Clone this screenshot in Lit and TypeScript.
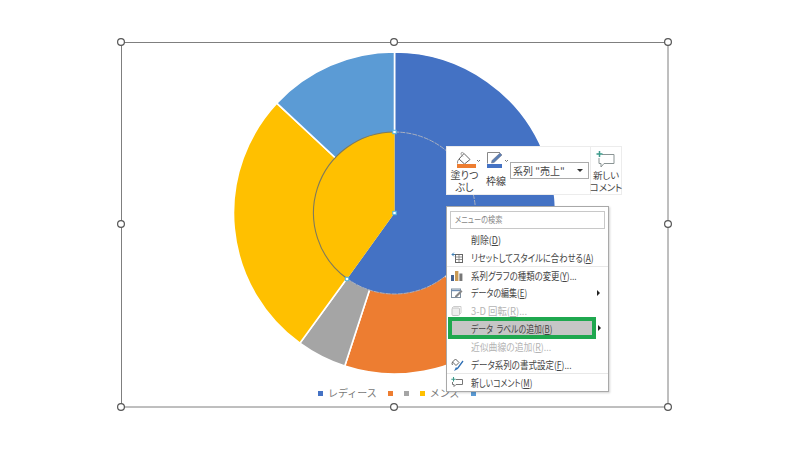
import { LitElement, html, css, svg } from "lit";
import { customElement } from "lit/decorators.js";

const CX = 394.5, CY = 213;
const pt = (r: number, a: number) => {
  const t = (a * Math.PI) / 180;
  return [CX + r * Math.sin(t), CY - r * Math.cos(t)];
};
const wedge = (r: number, a0: number, a1: number) => {
  const [x0, y0] = pt(r, a0), [x1, y1] = pt(r, a1);
  return `M${CX} ${CY}L${x0} ${y0}A${r} ${r} 0 ${a1 - a0 > 180 ? 1 : 0} 1 ${x1} ${y1}Z`;
};
const arc = (r: number, a0: number, a1: number) => {
  const [x0, y0] = pt(r, a0), [x1, y1] = pt(r, a1);
  return `M${x0} ${y0}A${r} ${r} 0 ${a1 - a0 > 180 ? 1 : 0} 1 ${x1} ${y1}`;
};
const outer: [number, number, string][] = [
  [0, 141, "#4472c4"], [141, 198, "#ed7d31"], [198, 216, "#a5a5a5"], [216, 313, "#ffc000"], [313, 360, "#5b9bd5"],
];
const inner: [number, number, string][] = [[0, 215.7, "#4472c4"], [215.7, 360, "#ffc000"]];
const handles: [number, number][] = [[121, 42], [394, 42], [668, 42], [121, 224], [668, 224], [121, 407], [394, 407], [668, 407]];
const legend: [string, string][] = [["#4472c4", "レディース"], ["#ed7d31", ""], ["#a5a5a5", ""], ["#ffc000", "メンズ"], ["#5b9bd5", ""]];

const icons = {
  reset: svg`<svg width="13" height="11" viewBox="0 0 13 11"><path d="M1 2.5 h4 M2.8 .7 L1 2.5 L2.8 4.3" fill="none" stroke="#3f7fb5" stroke-width="1"/><rect x="4.5" y="2.5" width="7" height="8" fill="#fff" stroke="#666"/><path d="M4.5 5 h7 M4.5 7.5 h7 M8 2.5 v8" stroke="#777" stroke-width=".8"/></svg>`,
  chart: svg`<svg width="12" height="10" viewBox="0 0 12 10"><rect x="0" y="4" width="3" height="6" fill="#44618f"/><rect x="4" y="0" width="3.4" height="10" fill="#c99a55"/><rect x="8.4" y="2.5" width="3" height="7.5" fill="#777"/></svg>`,
  edit: svg`<svg width="12" height="10" viewBox="0 0 12 10"><rect x=".5" y="1" width="9" height="8.5" fill="#fff" stroke="#7f8f9f"/><path d="M.5 2.5 h9" stroke="#6f8fb5" stroke-width="1.4"/><path d="M4 8 L10 2 L11.5 3.5 L6 9 L4 9 Z" fill="#888"/></svg>`,
  cube: svg`<svg width="11" height="10" viewBox="0 0 11 10"><rect x="1" y="2" width="7.5" height="7.5" rx="1" fill="#eee" stroke="#c4c4c4"/><path d="M1 2 L2.5 .5 H10 V7 L8.5 8.5" fill="none" stroke="#ccc"/></svg>`,
  format: svg`<svg width="13" height="13" viewBox="0 0 13 13"><path d="M1.5 4 L4.5 1 L8 4.5 L5 7.5 Z" fill="#fff" stroke="#666"/><path d="M1.5 4 Q.5 6 1.5 7" fill="none" stroke="#666"/><path d="M12 3 L6.5 10.5 L4.5 11.5 L5.5 9.5" fill="none" stroke="#2f6fb5" stroke-width="1.3"/></svg>`,
  comment: svg`<svg width="12" height="10" viewBox="0 0 12 10"><path d="M5 2.5 H11.5 V7.5 H5 L3 9.5 V7.5 H1.5 V5" fill="#fff" stroke="#777"/><path d="M2.5 0 V4.5 M.3 2.2 H4.7" stroke="#3d9a8b" stroke-width="1.1"/></svg>`,
};

interface Item { t: string; k: string; end?: string; sx: number; icon?: unknown; cls?: string; arrow?: boolean; }
const items: Item[] = [
  { t: "削除(", k: "D", end: ")", sx: 0.89 },
  { t: "リセットしてスタイルに合わせる(", k: "A", end: ")", sx: 0.83, icon: icons.reset },
  { t: "系列グラフの種類の変更(", k: "Y", end: ")...", sx: 0.84, icon: icons.chart, cls: "sep" },
  { t: "データの編集(", k: "E", end: ")", sx: 0.8, icon: icons.edit, arrow: true },
  { t: "3-D 回転(", k: "R", end: ")...", sx: 0.94, icon: icons.cube, cls: "dis" },
  { t: "データ\u00a0\u00a0ラベルの追加(", k: "B", end: ")", sx: 0.785, cls: "hl", arrow: true },
  { t: "近似曲線の追加(", k: "R", end: ")...", sx: 0.88, cls: "dis" },
  { t: "データ系列の書式設定(", k: "F", end: ")...", sx: 0.85, icon: icons.format },
  { t: "新しいコメント(", k: "M", end: ")", sx: 0.79, icon: icons.comment, cls: "sep" },
];

@customElement("app-root")
export class AppRoot extends LitElement {
  static styles = css`
    :host { display: block; width: 793px; height: 454px; background: #fff; position: relative; overflow: hidden;
      font-family: "Noto Sans CJK JP", "Liberation Sans", sans-serif; color: #444; font-feature-settings: "palt"; }
    .chart { position: absolute; left: 0; top: 0; width: 793px; height: 454px; }
    .legend { position: absolute; left: 318px; top: 386px; display: flex; align-items: center; gap: 11px; font-size: 10px; line-height: 14px; color: #777; font-feature-settings: normal; }
    .lg { display: flex; align-items: center; gap: 5px; }
    .sw { width: 5px; height: 5px; display: block; }

    .toolbar { position: absolute; left: 446px; top: 146px; width: 176px; height: 49px; background: #fff; border: 1px solid #ececec; box-sizing: border-box; display: flex; font-size: 10px; line-height: 12px; color: #444; }
    .tool { display: flex; flex-direction: column; align-items: center; box-sizing: border-box; flex: none; white-space: nowrap; }
    .tool svg { display: block; flex: none; }
    .tool span { text-align: center; }
    .fill { width: 35px; padding-top: 4px; }
    .fill span { margin-top: 1px; }
    .line { width: 28px; padding-top: 4px; }
    .line span { margin-top: 7px; }
    .select { width: 79px; height: 17px; margin-top: 15px; border: 1px solid #ababab; box-sizing: border-box; flex: none; display: flex; align-items: center; justify-content: space-between; padding: 0 5px 0 2px; font-size: 10px; white-space: nowrap; }
    .caret { width: 0; height: 0; border-left: 3.5px solid transparent; border-right: 3.5px solid transparent; border-top: 3.5px solid #333; }
    .cmt { width: 31px; padding-top: 4px; margin-left: 1px; border-left: 1px solid #ececec; }
    .cmt span { font-size: 9.5px; margin-top: 1px; letter-spacing: -.2px; }

    .menu { position: absolute; left: 446px; top: 206px; width: 163px; height: 186px; background: #fff; border: 1px solid #a9a9a9; box-sizing: border-box; box-shadow: 1px 1px 2px rgba(0,0,0,.18); font-size: 10px; color: #444; }
    .search { margin: 4px 3px 1.6px 3px; height: 18px; border: 1px solid #c8c8c8; box-sizing: border-box; padding-left: 4px; font-size: 9px; line-height: 16px; color: #888; }
    .search span { display: inline-block; transform: scaleX(.8); transform-origin: left center; white-space: nowrap; }
    .row { height: 17.8px; display: flex; align-items: center; position: relative; white-space: nowrap; box-sizing: border-box; }
    .row u { text-underline-offset: 1px; }
    .label { display: inline-block; flex: none; transform-origin: left center; }
    .ic { width: 24px; flex: none; display: flex; padding-left: 4px; box-sizing: border-box; }
    .ic svg { display: block; }
    .sep { border-top: 1px solid #e8e8e8; }
    .dis { color: #b4b4b4; }
    .arrow { position: absolute; right: 8px; top: 6px; width: 0; height: 0; border-top: 3px solid transparent; border-bottom: 3px solid transparent; border-left: 3.5px solid #222; }
    .hl { height: 22px; margin: -2.1px 0 -2.1px 1px; width: 148px; border: 4px solid #1fa84f; background: #c6c6c6; z-index: 1; }
    .hl .ic { width: 19px; }
    .hl .arrow { right: -9px; top: 4px; }
  `;

  render() {
    return html`
      <svg class="chart" viewBox="0 0 793 454">
        ${outer.map(([a, b, c]) => svg`<path d=${wedge(161, a, b)} fill=${c} stroke="#fff" stroke-width="1.6"/>`)}
        ${inner.map(([a, b, c]) => svg`<path d=${wedge(81, a, b)} fill=${c}/>`)}
        <path d=${arc(81, 215.7, 360)} fill="none" stroke="#7f7a5c" stroke-width="1.1"/>
        <path d=${arc(81, 0, 215.7)} fill="none" stroke="#a9b0c0" stroke-width="1" stroke-dasharray="5 1"/>
        ${[[394.5, 132], [394.5, 213], [347, 279]].map(([x, y]) => svg`<rect x=${x - 1.7} y=${y - 1.7} width="3.4" height="3.4" fill="#fff" stroke="#4fb3e0" stroke-width="1"/>`)}
        <rect x="121.5" y="42.5" width="546.5" height="364.5" fill="none" stroke="#7f7f7f" stroke-width="1"/>
        ${handles.map(([x, y]) => svg`<circle cx=${x} cy=${y} r="3.4" fill="#fff" stroke="#555" stroke-width="1.2"/>`)}
      </svg>

      <div class="legend">
        ${legend.map(([c, t]) => html`<div class="lg"><i class="sw" style="background:${c}"></i>${t ? html`<span>${t}</span>` : ""}</div>`)}
      </div>

      <div class="toolbar">
        <div class="tool fill">
          <svg width="30" height="17" viewBox="0 0 30 17">
            <path d="M14 2.5 L20 8.5 L14.5 13 L9 8 Z" fill="#fff" stroke="#666" stroke-width="1"/>
            <path d="M14 2.5 Q12 0.5 11 2 Q10.5 3.5 13 5.5" fill="none" stroke="#888" stroke-width=".8"/>
            <path d="M9 8 Q7 10 7.5 12.5" fill="none" stroke="#888" stroke-width="1"/>
            <rect x="7" y="13" width="19" height="4" fill="#ed7d31"/>
            <path d="M27 9 l1.5 1.5 l1.5 -1.5" fill="none" stroke="#666" stroke-width=".9"/>
          </svg>
          <span>塗りつ<br>ぶし</span>
        </div>
        <div class="tool line">
          <svg width="26" height="17" viewBox="0 0 26 17">
            <path d="M4.5 12.5 V1.5 H17" fill="none" stroke="#888" stroke-width="1"/>
            <path d="M17 2 L19 4 L11 11.5 L8.5 12 L9 9.5 Z" fill="#5b7fb5" stroke="#667" stroke-width=".5"/>
            <rect x="4" y="13" width="15" height="4" fill="#4472c4"/>
            <path d="M22 9 l1.5 1.5 l1.5 -1.5" fill="none" stroke="#666" stroke-width=".9"/>
          </svg>
          <span>枠線</span>
        </div>
        <div class="select"><span>系列 "売上"</span><i class="caret"></i></div>
        <div class="tool cmt">
          <svg width="24" height="17" viewBox="0 0 24 17">
            <path d="M8 3.5 H20 V12.5 H10 L7 16 V12.5 H5 V7" fill="#fff" stroke="#8a9494" stroke-width="1"/>
            <path d="M5.5 0 V6 M2.5 3 H8.5" stroke="#3d9a8b" stroke-width="1.5"/>
          </svg>
          <span>新しい<br>コメント</span>
        </div>
      </div>

      <div class="menu">
        <div class="search"><span>メニューの検索</span></div>
        ${items.map((it) => html`
          <div class="row ${it.cls ?? ""}">
            <span class="ic">${it.icon ?? ""}</span>
            <span class="label" style="transform:scaleX(${it.sx})">${it.t}<u>${it.k}</u>${it.end}</span>
            ${it.arrow ? html`<i class="arrow"></i>` : ""}
          </div>`)}
      </div>
    `;
  }
}
